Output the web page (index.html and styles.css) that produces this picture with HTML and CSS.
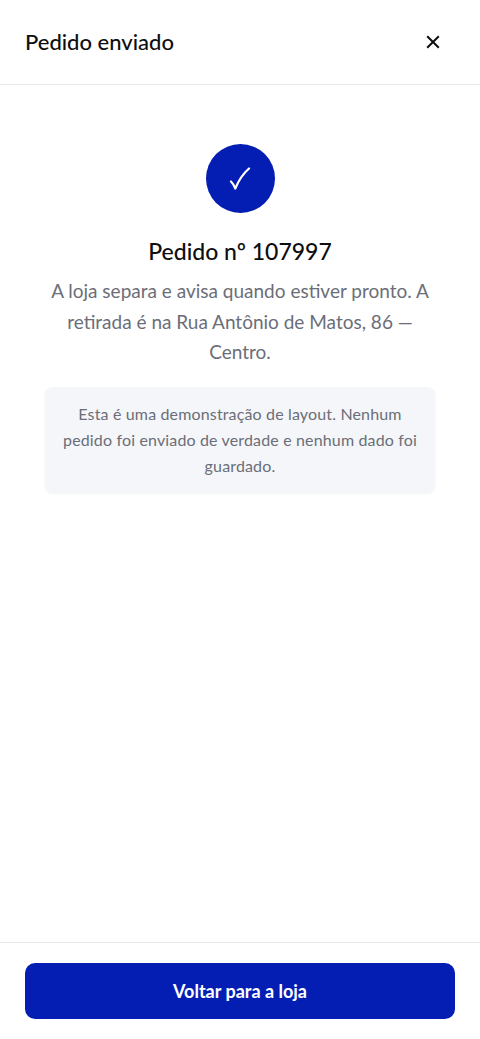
FILE: index.html
```html
<!DOCTYPE html>
<html lang="pt-BR">
<head>
    <meta charset="UTF-8">
    <meta name="viewport" content="width=device-width, initial-scale=1.0">
    <title>Pedido enviado</title>
    <link rel="stylesheet" href="styles.css">
</head>
<body>
    <div class="screen">
        <header class="topbar">
            <h1 class="topbar-title">Pedido enviado</h1>
            <button class="close-btn" aria-label="Fechar">
                <svg width="14" height="14" viewBox="0 0 14 14" fill="none">
                    <path d="M1.2 1.2 12.8 12.8M12.8 1.2 1.2 12.8" stroke="#0e0e10" stroke-width="2"/>
                </svg>
            </button>
        </header>

        <main class="content">
            <div class="check-circle">
                <svg width="22" height="24" viewBox="0 0 22 24" fill="none">
                    <path d="M2 14.5C3.6 16 5 18.4 6.3 21.5C9.5 13.5 13.8 7 20 1.5" stroke="#fff" stroke-width="2.2" stroke-linecap="round" stroke-linejoin="round"/>
                </svg>
            </div>
            <h2 class="order-number">Pedido nº 107997</h2>
            <p class="order-text">A loja separa e avisa quando estiver pronto. A retirada é na Rua Antônio de Matos, 86 — Centro.</p>
            <div class="notice">Esta é uma demonstração de layout. Nenhum pedido foi enviado de verdade e nenhum dado foi guardado.</div>
        </main>

        <footer class="bottombar">
            <button class="primary-btn">Voltar para a loja</button>
        </footer>
    </div>
</body>
</html>
```

FILE: styles.css
```css
* {
    box-sizing: border-box;
}
body {
    margin: 0;
    background: #fff;
    font-family: "Lato", "Liberation Sans", sans-serif;
}
.screen {
    display: flex;
    flex-direction: column;
    height: 1039px;
}
.topbar {
    display: flex;
    align-items: center;
    justify-content: space-between;
    height: 85px;
    padding: 0 25px 2px;
    border-bottom: 1px solid #e8e8ea;
}
.topbar-title {
    margin: 0;
    font-size: 22px;
    font-weight: 500;
    color: #0e0e10;
}
.close-btn {
    display: flex;
    align-items: center;
    justify-content: center;
    width: 36px;
    height: 36px;
    margin: 1px 4px 0 0;
    padding: 0;
    border: 0;
    background: none;
}
.content {
    flex: 1;
    display: flex;
    flex-direction: column;
    align-items: center;
    padding: 59px 45px 0;
    text-align: center;
}
.check-circle {
    display: flex;
    align-items: center;
    justify-content: center;
    width: 69px;
    height: 69px;
    border-radius: 50%;
    background: #041eb4;
}
.order-number {
    margin: 21px 0 0;
    font-size: 23px;
    line-height: 34px;
    font-weight: 500;
    color: #0e0e10;
}
.order-text {
    margin: 8px 0 0;
    font-size: 19px;
    line-height: 30.6px;
    color: #6b6e78;
}
.notice {
    width: 100%;
    margin-top: 19px;
    padding: 14px 16px;
    border-radius: 8px;
    background: #f4f6f9;
    box-shadow: 0 1px 3px rgba(20, 30, 60, 0.05);
    font-size: 16px;
    letter-spacing: 0.15px;
    line-height: 26px;
    color: #6b6e78;
}
.bottombar {
    height: 97px;
    padding: 20px 25px 0;
    border-top: 1px solid #e8e8ea;
}
.primary-btn {
    display: block;
    width: 100%;
    height: 56px;
    border: 0;
    border-radius: 10px;
    background: #041eb4;
    color: #fff;
    font-family: inherit;
    font-size: 18px;
    font-weight: 700;
}
```
